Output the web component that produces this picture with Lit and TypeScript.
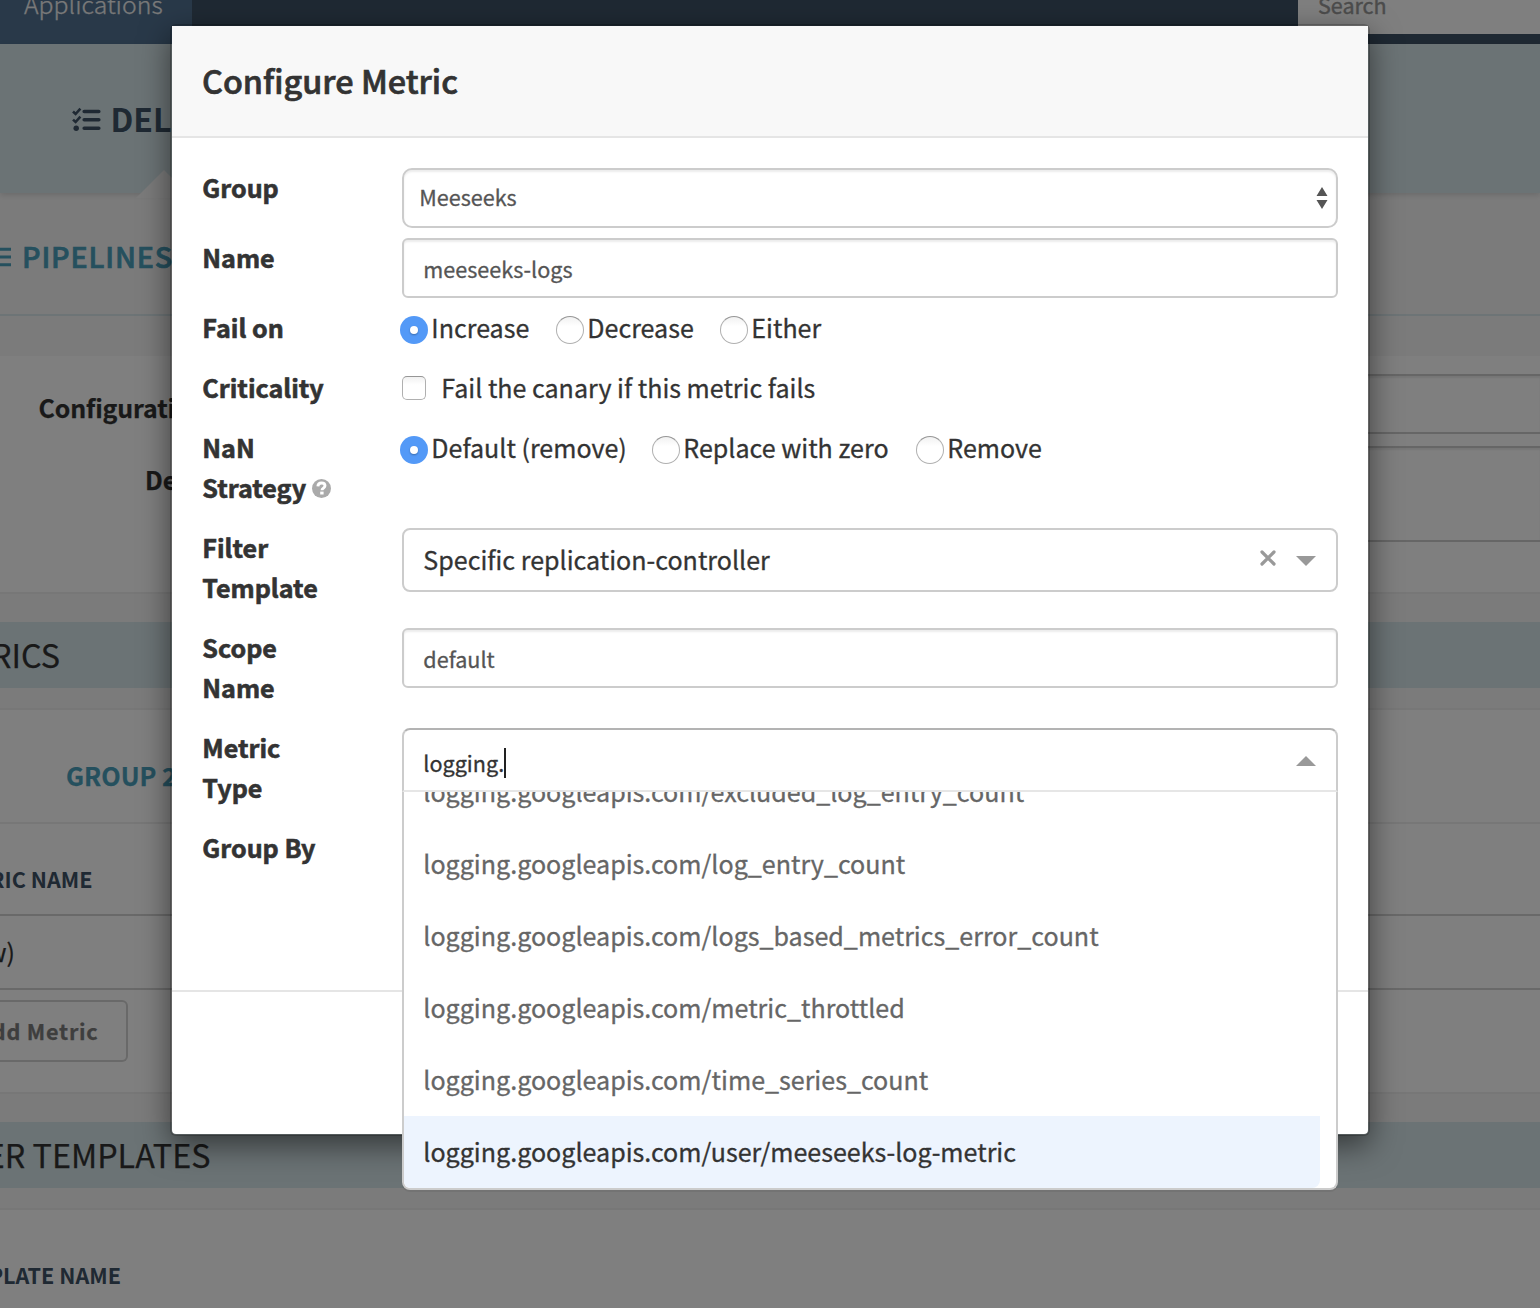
import { LitElement, html, css, svg } from "lit";
import { customElement, property } from "lit/decorators.js";
import { classMap } from "lit/directives/class-map.js";
import { styleMap } from "lit/directives/style-map.js";

const FONT = css`"Noto Sans CJK SC", "Noto Sans", sans-serif`;

/** Application page that sits behind the modal backdrop. */
@customElement("canary-page")
export class CanaryPage extends LitElement {
  static styles = css`
    :host {
      display: flex;
      flex-direction: column;
      height: 1308px;
      background: #f7f7f7;
      color: #333;
      font-family: ${FONT};
      font-size: 25px;
      white-space: nowrap;
      -webkit-text-stroke-width: 0.25px;
    }
    * { box-sizing: border-box; }
    .nav {
      display: flex;
      justify-content: space-between;
      height: 44px;
      flex: none;
      background: #3e5266;
      line-height: 40px;
      overflow: hidden;
    }
    .tab { width: 192px; background: #527292; color: #f3f3f3; font-weight: 300; font-size: 24.8px; padding-left: 24px; }
    .nav span { display: block; margin-top: -17px; }
    .search { width: 242px; height: 34px; background: #fff; color: #999; font-size: 21.5px; padding-left: 20px; -webkit-text-stroke-width: 0.4px; }
    .search span { margin-top: -15px; }
    .app-header {
      position: relative;
      display: flex;
      align-items: flex-start;
      gap: 10px;
      flex: none;
      height: 149px;
      padding: 54px 0 0 71.500px;
      background: #d7e7eb;
      box-shadow: 0 2px 6px rgba(0, 0, 0, 0.14);
      color: #3e5266;
      font-size: 32px;
      font-weight: 700;
      line-height: 40px;
      -webkit-text-stroke-width: 0;
    }
    .icon { margin-top: 9px; }
    .notch { position: absolute; left: 136px; top: 126px; }
    .subnav {
      display: flex;
      gap: 10px;
      flex: none;
      height: 123px;
      padding-top: 43px;
      border-bottom: 2px solid #dbe9ec;
      color: #4aa0bc;
      font-size: 28.6px;
      font-weight: 500;
      letter-spacing: 0.85px;
      line-height: 40px;
      -webkit-text-stroke-width: 0.7px;
    }
    .subnav svg { margin: 11px 0 0 -14px; flex: none; }
    .settings {
      flex: none;
      height: 238px;
      margin-top: 40px;
      padding-top: 18px;
      background: #fff;
      border-bottom: 2px solid #efefef;
      font-size: 24.9px;
      font-weight: 700;
    }
    .field { display: flex; line-height: 40px; }
    .field + .field { margin-top: 12px; }
    .field .lbl { width: 172px; padding: 13px 0 0 38.500px; overflow: hidden; letter-spacing: -0.12px; }
    .field.desc .lbl { padding-left: 145px; }
    .field .box {
      flex: 1;
      height: 60px;
      border: 2px solid #ccc;
      border-right: 0;
      box-shadow: inset 0 2px 2px rgba(0, 0, 0, 0.075);
    }
    .field.desc .box { height: 96px; }
    .band {
      flex: none;
      height: 66px;
      margin-top: 28px;
      background: #d7e7eb;
      font-size: 32.3px;
      line-height: 64px;
    }
    .end { display: flex; justify-content: flex-end; }
    .metrics-title { width: 60px; }
    .templates-title { width: 210.500px; }
    .metric-name { width: 92.500px; }
    .template-name { width: 121px; }
    .new { width: 15px; }
    .metrics {
      flex: none;
      height: 386px;
      margin-top: 20px;
      background: #fff;
      border-top: 2px solid #efefef;
      border-bottom: 2px solid #efefef;
    }
    .group {
      width: 172px;
      overflow: hidden;
      height: 112px;
      padding: 45px 0 0 66px;
      color: #4aa0bc;
      font-size: 25.2px;
      font-weight: 700;
      line-height: 40px;
    }
    .th { color: #3e5266; font-size: 21.6px; font-weight: 700; line-height: 40px; -webkit-text-stroke-width: 0; }
    .metrics .th { height: 94px; padding-top: 35px; border-top: 2px solid #efefef; border-bottom: 2px solid #d3d3d3; }
    .td { height: 74px; padding-top: 15px; border-bottom: 2px solid #d3d3d3; line-height: 40px; }
    .add {
      width: 128px;
      height: 62px;
      margin-top: 10px;
      padding-right: 27.500px;
      border: 2px solid #d3d3d3;
      border-left: 0;
      border-radius: 0 6px 6px 0;
      color: #7c7c7c;
      font-size: 21.6px;
      font-weight: 700;
      letter-spacing: 0.75px;
      line-height: 57px;
    }
    .templates { flex: 1; margin-top: 20px; padding-top: 45px; background: #fff; border-top: 2px solid #efefef; }
  `;

  render() {
    return html`
      <div class="nav">
        <div class="tab"><span>Applications</span></div>
        <div class="search"><span>Search</span></div>
      </div>
      <div class="app-header">
        <svg class="icon" width="29" height="25" viewBox="0 0 29 25" fill="none" stroke="#3e5266">
          <path d="M1 4.5 3.6 7 8.4 1.6M1 12.6 3.6 15 8.4 9.7" stroke-width="2.6"></path>
          <path d="M12.2 4.500H26.800M12.2 12.700H26.800M12.2 21.200H26.800" stroke-width="3.600" stroke-linecap="round"></path>
          <circle cx="4.200" cy="21.300" r="2.700" fill="#3e5266" stroke="none"></circle>
        </svg>
        <span>DELIVERY</span>
        <svg class="notch" width="56" height="28" viewBox="0 0 56 28"><path d="M0 28 28 0 56 28Z" fill="#f7f7f7"></path></svg>
      </div>
      <div class="subnav">
        <svg width="26" height="20" viewBox="0 0 26 20" fill="none" stroke="#4aa0bc" stroke-width="3"><path d="M6 2.2H25M6 10H25M6 17.8H25"></path></svg>
        <span>PIPELINES</span>
      </div>
      <div class="settings">
        <div class="field"><div class="lbl">Configuration Name</div><div class="box"></div></div>
        <div class="field desc"><div class="lbl">Description</div><div class="box"></div></div>
      </div>
      <div class="band"><div class="end metrics-title">METRICS</div></div>
      <div class="metrics">
        <div class="group">GROUP 2</div>
        <div class="th"><div class="end metric-name">METRIC NAME</div></div>
        <div class="td"><div class="end new">(new)</div></div>
        <div class="end add">Add Metric</div>
      </div>
      <div class="band"><div class="end templates-title">FILTER TEMPLATES</div></div>
      <div class="templates"><div class="th"><div class="end template-name">TEMPLATE NAME</div></div></div>
    `;
  }
}

interface RadioOption {
  text: string;
  width: number;
}

@customElement("radio-group")
export class RadioGroup extends LitElement {
  @property({ attribute: false }) options: RadioOption[] = [];
  @property({ type: Number }) selected = 0;

  static styles = css`
    :host { display: flex; margin-left: -2px; height: 40px; }
    .option { display: flex; gap: 3.300px; white-space: nowrap; }
    .dot {
      box-sizing: border-box;
      flex: none;
      width: 28px;
      height: 28px;
      margin-top: 8px;
      border: 1px solid #b0b0b0;
      border-top-color: #969696;
      border-radius: 50%;
      background: linear-gradient(#f1f1f1, #fff 35%);
      display: grid;
      place-items: center;
    }
    .dot.on { border: 0; background: #5399f7; }
    .dot.on::after {
      content: "";
      width: 8px;
      height: 8px;
      border-radius: 50%;
      background: #fff;
      box-shadow: 0 1px 2px rgba(0, 0, 0, 0.3);
    }
    .text { line-height: 40px; margin-top: -1px; }
  `;

  render() {
    return this.options.map(
      (o, i) => html`<label class="option" style=${styleMap({ width: `${o.width}px` })}
        ><span class=${classMap({ dot: true, on: i === this.selected })}></span><span class="text">${o.text}</span></label
      >`
    );
  }
}

const arrow = (up: boolean) => html`<svg width="20" height="10" viewBox="0 0 20 10">
  ${up ? svg`<path d="M0 10 10 0 20 10Z" fill="#999"></path>` : svg`<path d="M0 0H20L10 10Z" fill="#999"></path>`}
</svg>`;

@customElement("app-root")
export class AppRoot extends LitElement {
  private metricTypes = [
    "logging.googleapis.com/excluded_log_entry_count",
    "logging.googleapis.com/log_entry_count",
    "logging.googleapis.com/logs_based_metrics_error_count",
    "logging.googleapis.com/metric_throttled",
    "logging.googleapis.com/time_series_count",
    "logging.googleapis.com/user/meeseeks-log-metric",
  ];

  private failOn: RadioOption[] = [
    { text: "Increase", width: 156 },
    { text: "Decrease", width: 164 },
    { text: "Either", width: 110 },
  ];

  private nanStrategies: RadioOption[] = [
    { text: "Default (remove)", width: 252 },
    { text: "Replace with zero", width: 264 },
    { text: "Remove", width: 140 },
  ];

  static styles = css`
    :host {
      display: block;
      position: relative;
      width: 1540px;
      height: 1308px;
      overflow: hidden;
      font-family: ${FONT};
      font-size: 25.06px;
      color: #333;
    }
    * { box-sizing: border-box; }
    .backdrop { position: absolute; inset: 0; padding: 24px 170px; background: rgba(0, 0, 0, 0.5); -webkit-text-stroke-width: 0.3px; }
    .modal {
      display: flex;
      flex-direction: column;
      height: 1112px;
      border: 2px solid rgba(0, 0, 0, 0.2);
      border-radius: 6px;
      background: #fff;
      background-clip: padding-box;
      box-shadow: 0 10px 30px rgba(0, 0, 0, 0.5);
    }
    .title {
      height: 112px;
      padding-left: 30px;
      background: #f8f8f8;
      border-bottom: 2px solid #e5e5e5;
      font-size: 32.4px;
      font-weight: 500;
      line-height: 108px;
      -webkit-text-stroke-width: 0.7px;
    }
    .form { display: flex; flex-direction: column; gap: 20px; flex: 1; padding: 30px; }
    .footer { height: 144px; border-top: 2px solid #e5e5e5; }
    .row { display: grid; grid-template-columns: 200px 1fr; align-items: start; }
    .tight { margin-bottom: -10px; }
    .lbl { margin-top: -1px; margin-bottom: 1px; padding-left: 0.300px; width: 140px; font-size: 25.1px; font-weight: 700; line-height: 40px; -webkit-text-stroke-width: 0.6px; }
    .lbl svg { margin-left: 6px; margin-bottom: 0.500px; -webkit-text-stroke-width: 0; }
    .two { height: 80px; }
    .input, .native, .select {
      display: flex;
      border: 2px solid #ccc;
      background: #fff;
    }
    .input, .native { height: 60px; font-size: 21.6px; color: #555; box-shadow: inset 0 2px 2px rgba(0, 0, 0, 0.075); }
    .input { border-radius: 6px; padding-left: 19.3px; line-height: 57px; }
    .native { border-radius: 10px; padding: 0 8px 0 15.2px; line-height: 53px; justify-content: space-between; }
    .native svg { margin-top: 17px; }
    .check { display: flex; gap: 15.300px; height: 40px; line-height: 38px; }
    .tick {
      width: 24px;
      height: 24px;
      margin-top: 8px;
      border: 1px solid #b0b0b0;
      border-top-color: #969696;
      border-radius: 5px;
      background: linear-gradient(#f1f1f1, #fff 35%);
    }
    .select { position: relative; height: 64px; border-radius: 8px; padding: 0 20px 0 19.3px; line-height: 58px; align-items: flex-start; }
    .grow { flex: 1; }
    .clear { margin: 20px 20px 0 0; }
    .select .down { display: flex; margin-top: 26px; }
    .select.open { border-color: #b3b3b3 #ccc #e6e6e6; border-radius: 8px 8px 0 0; font-size: 21.6px; line-height: 65px; }
    .caret { width: 2px; height: 30px; margin-top: 18px; margin-left: -0.200px; background: #222; }
    .menu {
      position: absolute;
      z-index: 2;
      left: -2px;
      right: -2px;
      top: 62px;
      height: 398px;
      display: flex;
      flex-direction: column;
      justify-content: flex-end;
      overflow: hidden;
      border: 2px solid #ccc;
      border-top: 0;
      border-radius: 0 0 8px 8px;
      background: #fff;
      padding-right: 16px;
      box-shadow: 0 2px 0 rgba(0, 0, 0, 0.06);
      font-size: 25.07px;
      color: #666;
    }
    .item { flex: none; height: 72px; padding-left: 19.3px; line-height: 71px; }
    .item.focused { background: #edf4fe; color: #333; border-radius: 0 0 8px 6px; }
  `;

  render() {
    const last = this.metricTypes.length - 1;
    return html`
      <canary-page></canary-page>
      <div class="backdrop">
        <div class="modal">
          <div class="title">Configure Metric</div>
          <div class="form">
            <div class="row tight">
              <div class="lbl">Group</div>
              <div class="native">
                <span>Meeseeks</span>
                <svg width="12" height="22" viewBox="0 0 12 22" fill="#555"><path d="M6 0 11.5 9H.5ZM6 22 .5 13h11Z"></path></svg>
              </div>
            </div>
            <div class="row tight">
              <div class="lbl">Name</div>
              <div class="input">meeseeks-logs</div>
            </div>
            <div class="row">
              <div class="lbl">Fail on</div>
              <radio-group .options=${this.failOn}></radio-group>
            </div>
            <div class="row">
              <div class="lbl">Criticality</div>
              <label class="check"><span class="tick"></span><span>Fail the canary if this metric fails</span></label>
            </div>
            <div class="row">
              <div class="lbl two">
                NaN Strategy<svg width="19" height="19" viewBox="0 0 19 19">
                  <circle cx="9.5" cy="9.5" r="9.5" fill="#aaa"></circle>
                  <path d="M5.900 7.400C6 4.900 7.500 4 9.500 4c2.100 0 3.500 1.100 3.500 2.800 0 2.200-3 2.300-3 4.400" fill="none" stroke="#fff" stroke-width="2.900"></path>
                  <path d="M8.200 12.600h3.400v2.900h-3.400Z" fill="#fff"></path>
                </svg>
              </div>
              <radio-group .options=${this.nanStrategies}></radio-group>
            </div>
            <div class="row">
              <div class="lbl two">Filter Template</div>
              <div class="select">
                <span class="grow">Specific replication-controller</span>
                <svg class="clear" width="16" height="16" viewBox="0 0 16 16" stroke="#999" stroke-width="3.200" stroke-linecap="round">
                  <path d="M2 2 14 14M14 2 2 14"></path>
                </svg>
                <span class="down">${arrow(false)}</span>
              </div>
            </div>
            <div class="row">
              <div class="lbl two">Scope Name</div>
              <div class="input">default</div>
            </div>
            <div class="row">
              <div class="lbl two">Metric Type</div>
              <div class="select open">
                <span>logging.</span><span class="caret"></span><span class="grow"></span>
                <span class="down">${arrow(true)}</span>
                <div class="menu">
                  ${this.metricTypes.map(
                    (m, i) => html`<div class=${classMap({ item: true, focused: i === last })}>${m}</div>`
                  )}
                </div>
              </div>
            </div>
            <div class="row"><div class="lbl">Group By</div></div>
          </div>
          <div class="footer"></div>
        </div>
      </div>
    `;
  }
}
